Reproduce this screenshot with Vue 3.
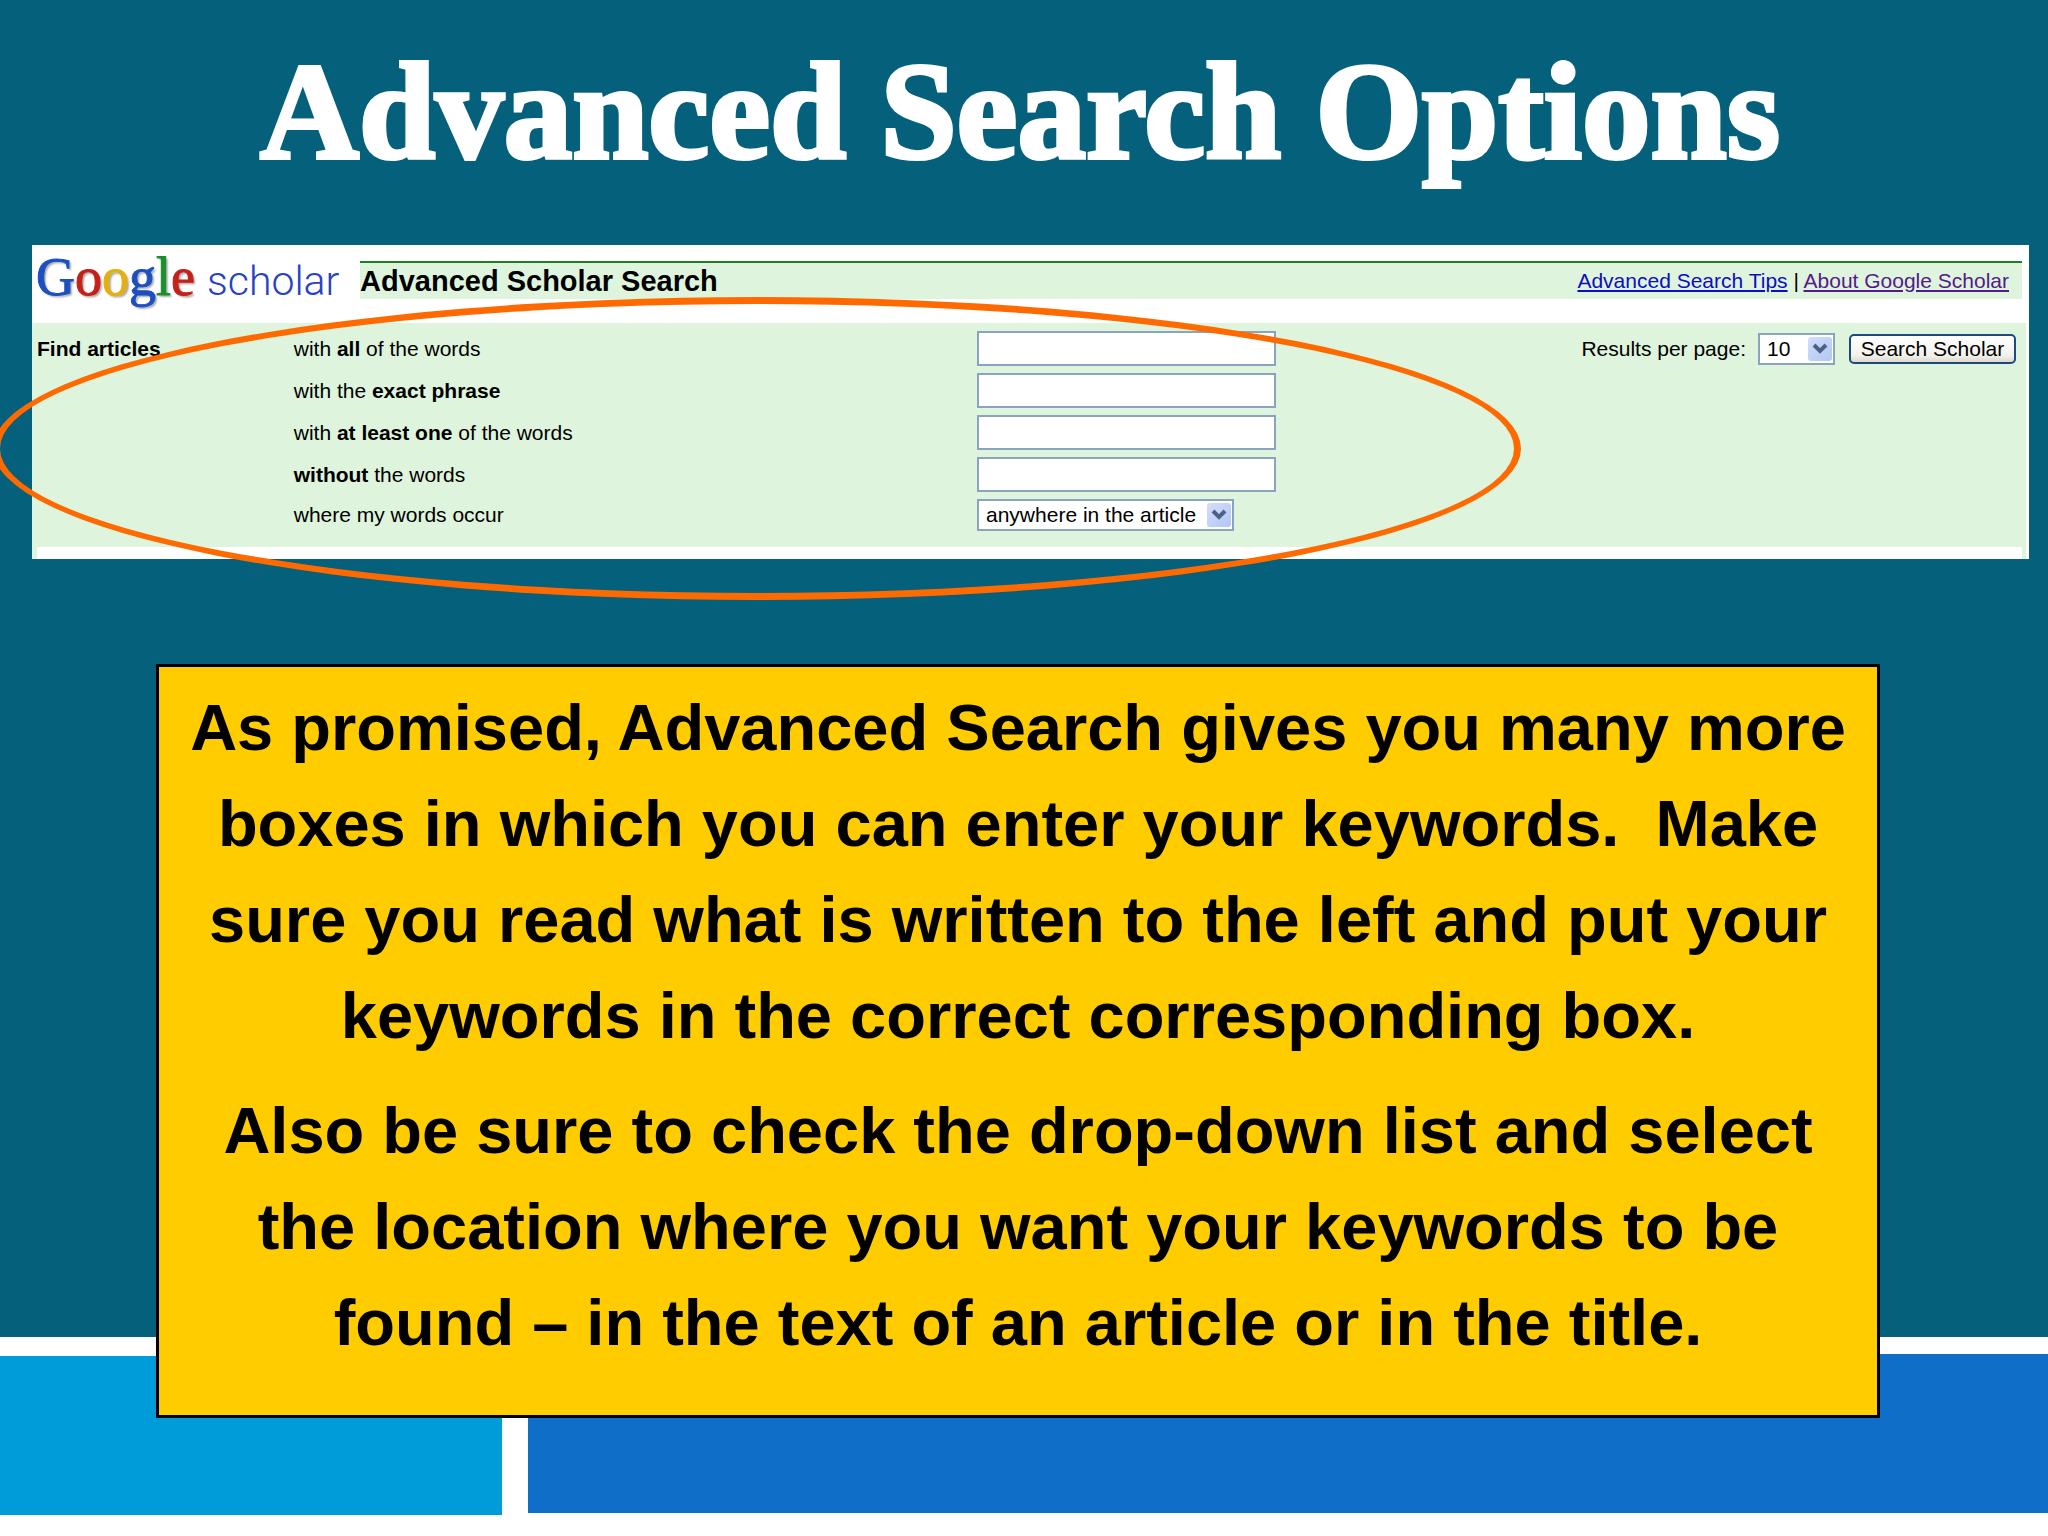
<script setup>
import { ref } from 'vue'

const wordFields = ref([
  { id: 'all', before: 'with ', strong: 'all', after: ' of the words', value: '' },
  { id: 'phrase', before: 'with the ', strong: 'exact phrase', after: '', value: '' },
  { id: 'any', before: 'with ', strong: 'at least one', after: ' of the words', value: '' },
  { id: 'none', before: '', strong: 'without', after: ' the words', value: '' },
])
const place = ref('anywhere in the article')
const perPage = ref('10')
const logo = [
  ['G', 'blue'],
  ['o', 'red'],
  ['o', 'gold'],
  ['g', 'blue'],
  ['l', 'green'],
  ['e', 'red'],
]
</script>

<template>
  <div class="page">
    <main class="slide">
      <h1>Advanced Search Options</h1>

      <section class="capture">
        <header class="top">
          <div class="logo">
            <span class="google"><span v-for="(l, i) in logo" :key="i" :class="l[1]">{{ l[0] }}</span></span>
            <span class="scholar">scholar</span>
          </div>
          <div class="bar">
            <h2>Advanced Scholar Search</h2>
            <nav>
              <a href="#tips">Advanced Search Tips</a> |
              <a href="#about" class="visited">About Google Scholar</a>
            </nav>
          </div>
        </header>

        <form class="form" @submit.prevent>
          <strong class="find">Find articles</strong>
          <div class="fields">
            <div v-for="f in wordFields" :key="f.id" class="field">
              <label :for="f.id">{{ f.before }}<b>{{ f.strong }}</b>{{ f.after }}</label>
              <input :id="f.id" v-model="f.value" type="text" />
            </div>
            <div class="field last">
              <label for="place">where my words occur</label>
              <span class="picker place">
                <select id="place" v-model="place">
                  <option>anywhere in the article</option>
                  <option>in the title of the article</option>
                </select>
                <span class="arrow"><svg viewBox="0 0 16 12"><path d="M2 2l6 6 6-6" /></svg></span>
              </span>
            </div>
          </div>
          <div class="actions">
            <label for="count">Results per page:</label>
            <span class="picker count">
              <select id="count" v-model="perPage">
                <option>10</option>
                <option>20</option>
              </select>
              <span class="arrow"><svg viewBox="0 0 16 12"><path d="M2 2l6 6 6-6" /></svg></span>
            </span>
            <button type="submit">Search Scholar</button>
          </div>
        </form>
        <div class="strip"></div>
        <div class="ring"></div>
      </section>

      <section class="note">
        <p>
          As promised, Advanced Search gives you many more
          <br />boxes in which you can enter your keywords.&nbsp; Make
          <br />sure you read what is written to the left and put your
          <br />keywords in the correct corresponding box.
        </p>
        <p>
          Also be sure to check the drop-down list and select
          <br />the location where you want your keywords to be
          <br />found – in the text of an article or in the title.
        </p>
      </section>
    </main>

    <footer class="blocks">
      <div class="cyan"></div>
      <div class="royal"></div>
    </footer>
  </div>
</template>

<style>
body {
  margin: 0;
  background: #fff;
}
</style>

<style scoped>
.page {
  overflow: hidden;
  background: #fff;
  color: #000;
  font-family: "Liberation Sans", Arial, sans-serif;
}
.slide {
  display: flex;
  flex-direction: column;
  background: #04607b;
}
h1 {
  margin: 0;
  padding: 32px 8px 53px 0;
  color: #fff;
  font: bold 137px/160px "Liberation Serif", "Times New Roman", serif;
  text-align: center;
  -webkit-text-stroke: 4px #fff;
}

.capture {
  position: relative;
  margin: 0 19px 0 32px;
  background: #fff;
  font-size: 21px;
  line-height: 24px;
}
.top {
  display: flex;
  height: 78px;
}
.logo {
  display: flex;
  flex: none;
  align-items: baseline;
  gap: 12px;
  width: 320px;
  padding-left: 4px;
  line-height: 64px;
}
.google {
  font-family: "Liberation Serif", "Times New Roman", serif;
  font-size: 54px;
  text-shadow: 2px 2px 2px #aaa;
  -webkit-text-stroke: 1px;
}
.scholar {
  color: #2743c4;
  font-family: Roboto, sans-serif;
  font-size: 41px;
  font-weight: 300;
}
.blue { color: #1d4fc0; }
.red { color: #c5201a; }
.gold { color: #e3b010; }
.green { color: #1b8f2c; }
.bar {
  display: flex;
  flex: 1;
  align-items: center;
  justify-content: space-between;
  height: 36px;
  margin: 16px 7px 0 4px;
  padding-right: 13px;
  border-top: 2px solid #1f7d22;
  background: #def4dc;
}
h2 {
  margin: 0;
  font-size: 29px;
  line-height: 36px;
}
nav a {
  color: #0d0dc4;
}
nav a.visited {
  color: #551a8b;
}

.form {
  display: grid;
  grid-template-columns: 262fr 1289fr 443fr;
  margin-right: 3px;
  padding: 8px 0 16px;
  background: #def4dc;
}
.find {
  padding: 6px 0 0 5px;
}
.fields {
  display: flex;
  flex-direction: column;
  gap: 7px;
}
.field {
  display: grid;
  grid-template-columns: 684fr 605fr;
  align-items: center;
  height: 35px;
}
.field.last {
  height: 32px;
}
input,
select {
  box-sizing: border-box;
  margin: 0;
  border: 2px solid #8aa3be;
  border-radius: 0;
  background: #fff;
  color: #000;
  font: inherit;
}
input {
  width: 299px;
  height: 35px;
  padding: 0 8px;
}
select {
  width: 100%;
  height: 32px;
  padding: 0 0 0 7px;
  appearance: none;
}
.picker {
  position: relative;
  display: block;
}
.place { width: 257px; }
.count { width: 77px; }
.arrow {
  position: absolute;
  top: 4px;
  right: 3px;
  bottom: 4px;
  display: flex;
  align-items: center;
  justify-content: center;
  width: 24px;
  border-radius: 3px;
  background: linear-gradient(135deg, #d3defc, #b0c6f4);
  pointer-events: none;
}
.arrow svg {
  width: 16px;
  height: 12px;
  fill: none;
  stroke: #4d6185;
  stroke-width: 4;
}
.actions {
  display: flex;
  align-items: center;
  justify-content: flex-end;
  height: 35px;
  padding-right: 10px;
  white-space: nowrap;
}
.actions label {
  margin-right: 12px;
}
button {
  width: 167px;
  height: 30px;
  margin: 0 0 0 14px;
  padding: 0;
  border: 2px solid #1f4a7d;
  border-radius: 5px;
  background: linear-gradient(#fff, #f2f1ec 75%, #dcd8cc);
  color: #000;
  font: inherit;
  line-height: 24px;
}
.strip {
  height: 12px;
  border: solid #def4dc;
  border-width: 0 4px 0 5px;
  margin-right: 3px;
}
/* highlight drawn around the search fields */
.ring {
  position: absolute;
  top: 52px;
  left: -39px;
  box-sizing: border-box;
  width: 76.5%;
  height: 303px;
  border: 7px solid #ff6a00;
  border-radius: 50%;
  pointer-events: none;
}

.note {
  position: relative;
  margin: 105px 168px -81px 156px;
  padding: 13px 16px 44px;
  border: 3px solid #000;
  background: #fc0;
  font-size: 65px;
  font-weight: bold;
  line-height: 96px;
  text-align: center;
}
.note p {
  margin: 0 0 19px;
}
.note p:last-child {
  margin: 0;
}

.blocks {
  display: flex;
  gap: 26px;
  padding: 17px 0 21px;
}
.cyan {
  flex: 502;
  height: 159px;
  margin-top: 2px;
  background: #009cda;
}
.royal {
  flex: 1520;
  height: 159px;
  background: #0f6ec8;
}
</style>
